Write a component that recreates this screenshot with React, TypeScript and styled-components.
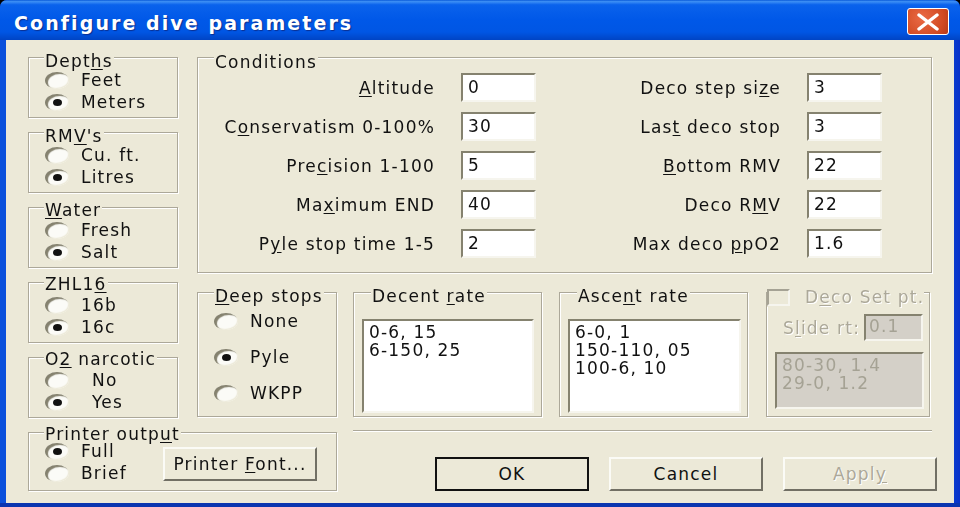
import React from "react";
import styled, { createGlobalStyle } from "styled-components";

const GlobalStyle = createGlobalStyle`
  html, body {
    margin: 0;
    padding: 0;
    background: #000;
    overflow: hidden;
  }
  body {
    font-family: "DejaVu Sans", "Liberation Sans", sans-serif;
    font-size: 17px;
    letter-spacing: 1.2px;
    color: #111;
  }
  u {
    text-underline-offset: 2px;
  }
`;

const Window = styled.div`
  width: 960px;
  height: 507px;
  display: flex;
  flex-direction: column;
  box-sizing: border-box;
  border-radius: 7px 7px 0 0;
  border-bottom: 4px solid #0a35b0;
  overflow: hidden;
  background: linear-gradient(90deg, #0a50dc 0, #0a50dc 98%, #0831c8 100%);
  filter: blur(0.35px);
`;

const TitleBar = styled.div`
  height: 40px;
  flex: none;
  display: flex;
  align-items: center;
  justify-content: space-between;
  padding: 0 11px 0 14px;
  background: linear-gradient(
    #0a5ad8 0,
    #3d8ff5 4%,
    #0a62ec 12%,
    #0058e8 50%,
    #0056e4 80%,
    #0044c4 100%
  );
`;

const Title = styled.div`
  margin-top: 5px;
  font-family: "DejaVu Sans", sans-serif;
  font-weight: 700;
  font-size: 19px;
  letter-spacing: 2.08px;
  color: #fff;
  text-shadow: 1px 1px 1px #0a2f90;
`;

const CloseButton = styled.div`
  width: 42px;
  height: 27px;
  box-sizing: border-box;
  margin-top: 3px;
  display: flex;
  align-items: center;
  justify-content: center;
  border: 1px solid #fff;
  border-radius: 3px;
  background: radial-gradient(circle at 35% 35%, #ea6a45, #d14a22 70%, #b83a18);
`;

const Client = styled.div`
  flex: 1;
  margin: 0 6px;
  padding: 17px 0 0 22px;
  background: #ece9d8;
  display: flex;
  flex-direction: column;
`;

const TopArea = styled.div`
  display: flex;
  gap: 19px;
`;

const LeftStack = styled.div`
  width: 150px;
  flex: none;
  display: flex;
  flex-direction: column;
  gap: 14px;
`;

const RightStack = styled.div`
  width: 735px;
  display: flex;
  flex-direction: column;
  gap: 19px;
`;

const GroupBox = styled.div<{ $width?: number; $height: number; $top?: number; $left?: number; $drop?: number }>`
  position: relative;
  box-sizing: border-box;
  flex: none;
  width: ${(p) => (p.$width ? `${p.$width}px` : "100%")};
  height: ${(p) => p.$height}px;
  margin-left: ${(p) => p.$left ?? 0}px;
  margin-top: ${(p) => p.$drop ?? 0}px;
  padding-top: ${(p) => p.$top ?? 11}px;
  border: 1px solid #aca899;
  box-shadow: 1px 1px 0 #fff, inset 1px 1px 0 #fff;
`;

const GroupLegend = styled.div<{ $left?: number; $top?: number }>`
  position: absolute;
  top: ${(p) => p.$top ?? -6}px;
  left: ${(p) => p.$left ?? 15}px;
  line-height: 18px;
  padding: 0 1px;
  background: #ece9d8;
  white-space: nowrap;
`;

const RadioRow = styled.div<{ $height?: number }>`
  height: ${(p) => p.$height ?? 22}px;
  display: flex;
  align-items: center;
  padding-left: 16px;
`;

const RadioMark = styled.span<{ $checked?: boolean }>`
  position: relative;
  width: 24px;
  height: 17px;
  flex: none;
  border-radius: 50%;
  background: #fbfbf7;
  box-shadow: inset 3px 2px 1px #85826f, inset -1px -1px 1px #ece9d8;
  &::after {
    content: "";
    display: ${(p) => (p.$checked ? "block" : "none")};
    position: absolute;
    left: 8px;
    top: 5px;
    width: 9px;
    height: 7px;
    border-radius: 50%;
    background: #111;
  }
`;

const RadioLabel = styled.span<{ $indent?: number }>`
  margin-left: ${(p) => p.$indent ?? 12}px;
`;

const ConditionsGrid = styled.div`
  display: grid;
  grid-template-columns: 263px 75px 271px 75px;
  grid-auto-rows: 29px;
  row-gap: 10px;
  align-items: center;
`;

const FieldLabel = styled.div`
  text-align: right;
  padding-right: 26px;
  white-space: nowrap;
`;

const TextField = styled.div<{ $disabled?: boolean; $width?: number }>`
  box-sizing: border-box;
  width: ${(p) => p.$width ?? 75}px;
  height: 29px;
  padding-left: 5px;
  line-height: 25px;
  border: 2px solid;
  border-color: #85826f #f6f5ee #f6f5ee #85826f;
  background: ${(p) => (p.$disabled ? "#d4d0c8" : "#fff")};
  color: ${(p) => (p.$disabled ? "#a5a294" : "#111")};
`;

const LowerRow = styled.div`
  display: flex;
  height: 125px;
`;

const ListBox = styled.div<{ $disabled?: boolean; $height: number; $width: number; $left: number }>`
  box-sizing: border-box;
  width: ${(p) => p.$width}px;
  height: ${(p) => p.$height}px;
  margin-left: ${(p) => p.$left}px;
  padding: 2px 0 0 5px;
  line-height: 18px;
  border: 2px solid;
  border-color: #85826f #f6f5ee #f6f5ee #85826f;
  background: ${(p) => (p.$disabled ? "#d4d0c8" : "#fff")};
  color: ${(p) => (p.$disabled ? "#a5a294" : "#111")};
`;

const CheckLegend = styled.div`
  position: absolute;
  top: -6px;
  left: 0;
  display: flex;
  align-items: center;
  background: #ece9d8;
  color: #aca899;
  text-shadow: 1px 1px 0 #fff;
  white-space: nowrap;
`;

const CheckBox = styled.span`
  width: 23px;
  height: 17px;
  box-sizing: border-box;
  margin-right: 15px;
  border: 2px solid;
  border-color: #a5a294 #f6f5ee #f6f5ee #a5a294;
`;

const SlideRow = styled.div`
  display: flex;
  align-items: center;
  justify-content: space-between;
  padding: 0 6px 0 16px;
  color: #aca899;
  text-shadow: 1px 1px 0 #fff;
  height: 27px;
  margin-bottom: 11px;
`;

const SmallField = styled(TextField)`
  height: 27px;
  line-height: 21px;
  padding-left: 3px;
  text-shadow: none;
`;

const BottomRow = styled.div`
  display: flex;
  gap: 16px;
  margin-top: 12px;
`;

const PrinterBody = styled.div`
  display: flex;
  justify-content: space-between;
  padding-right: 19px;
`;

const ButtonArea = styled.div`
  width: 584px;
`;

const Divider = styled.div`
  width: 579px;
  height: 1px;
  background: #aca899;
  box-shadow: 0 1px 0 #fff;
`;

const ButtonRow = styled.div`
  display: flex;
  justify-content: flex-end;
  gap: 20px;
  margin-top: 26px;
`;

const Button = styled.div<{ $default?: boolean; $disabled?: boolean; $top?: number }>`
  box-sizing: border-box;
  width: 154px;
  height: 34px;
  margin-top: ${(p) => p.$top ?? 0}px;
  display: flex;
  align-items: center;
  justify-content: center;
  background: #ece9d8;
  border: 2px solid;
  border-color: ${(p) => (p.$default ? "#111" : "#fbfbf6 #716f64 #716f64 #fbfbf6")};
  color: ${(p) => (p.$disabled ? "#aca899" : "#111")};
  text-shadow: ${(p) => (p.$disabled ? "1px 1px 0 #fff" : "none")};
`;

function RadioGroup({ items, checked, indent, height }: { items: string[]; checked: number; indent?: number; height?: number }) {
  return (
    <>
      {items.map((item, i) => (
        <RadioRow key={item} $height={height}>
          <RadioMark $checked={i === checked} />
          <RadioLabel $indent={indent}>{item}</RadioLabel>
        </RadioRow>
      ))}
    </>
  );
}

const rows: [React.ReactNode, string, React.ReactNode, string][] = [
  [<><u>A</u>ltitude</>, "0", <>Deco step si<u>z</u>e</>, "3"],
  [<>C<u>o</u>nservatism 0-100%</>, "30", <>Las<u>t</u> deco stop</>, "3"],
  [<>Pre<u>c</u>ision 1-100</>, "5", <><u>B</u>ottom RMV</>, "22"],
  [<>Ma<u>x</u>imum END</>, "40", <>Deco R<u>M</u>V</>, "22"],
  [<>P<u>y</u>le stop time 1-5</>, "2", <>Max deco <u>p</u>pO2</>, "1.6"],
];

export default function App() {
  return (
    <Window>
      <GlobalStyle />
      <TitleBar>
        <Title>Configure dive parameters</Title>
        <CloseButton>
          <svg width="24" height="18" viewBox="0 0 24 18">
            <path d="M3 2 L21 16 M21 2 L3 16" stroke="#fff" strokeWidth="3.4" strokeLinecap="round" />
          </svg>
        </CloseButton>
      </TitleBar>
      <Client>
        <TopArea>
          <LeftStack>
            <GroupBox $height={61}>
              <GroupLegend>Dept<u>h</u>s</GroupLegend>
              <RadioGroup items={["Feet", "Meters"]} checked={1} />
            </GroupBox>
            <GroupBox $height={61}>
              <GroupLegend>RM<u>V</u>'s</GroupLegend>
              <RadioGroup items={["Cu. ft.", "Litres"]} checked={1} />
            </GroupBox>
            <GroupBox $height={61}>
              <GroupLegend $top={-7}><u>W</u>ater</GroupLegend>
              <RadioGroup items={["Fresh", "Salt"]} checked={1} />
            </GroupBox>
            <GroupBox $height={61}>
              <GroupLegend $top={-8}>ZHL1<u>6</u></GroupLegend>
              <RadioGroup items={["16b", "16c"]} checked={1} />
            </GroupBox>
            <GroupBox $height={61}>
              <GroupLegend $top={-8}>O<u>2</u> narcotic</GroupLegend>
              <RadioGroup items={["No", "Yes"]} checked={1} indent={23} />
            </GroupBox>
          </LeftStack>
          <RightStack>
            <GroupBox $height={216} $top={15}>
              <GroupLegend $left={16} $top={-5}>Conditions</GroupLegend>
              <ConditionsGrid>
                {rows.map(([a, av, b, bv], i) => (
                  <React.Fragment key={i}>
                    <FieldLabel>{a}</FieldLabel>
                    <TextField>{av}</TextField>
                    <FieldLabel>{b}</FieldLabel>
                    <TextField>{bv}</TextField>
                  </React.Fragment>
                ))}
              </ConditionsGrid>
            </GroupBox>
            <LowerRow>
              <GroupBox $width={140} $height={125} $top={10}>
                <GroupLegend $left={16}><u>D</u>eep stops</GroupLegend>
                <RadioGroup items={["None", "Pyle", "WKPP"]} checked={1} height={36} />
              </GroupBox>
              <GroupBox $width={189} $height={125} $top={26} $left={16}>
                <GroupLegend $left={17}>Decent <u>r</u>ate</GroupLegend>
                <ListBox $width={172} $height={94} $left={8}>
                  0-6, 15<br />6-150, 25
                </ListBox>
              </GroupBox>
              <GroupBox $width={189} $height={125} $top={26} $left={17}>
                <GroupLegend $left={17}>Asce<u>n</u>t rate</GroupLegend>
                <ListBox $width={173} $height={94} $left={8}>
                  6-0, 1<br />150-110, 05<br />100-6, 10
                </ListBox>
              </GroupBox>
              <GroupBox $width={164} $height={125} $top={21} $left={18}>
                <CheckLegend>
                  <CheckBox />
                  <span>D<u>e</u>co Set pt.</span>
                </CheckLegend>
                <SlideRow>
                  <span>S<u>l</u>ide rt:</span>
                  <SmallField $disabled $width={59}>0.1</SmallField>
                </SlideRow>
                <ListBox $disabled $width={149} $height={57} $left={8}>
                  80-30, 1.4<br />29-0, 1.2
                </ListBox>
              </GroupBox>
            </LowerRow>
          </RightStack>
        </TopArea>
        <BottomRow>
          <GroupBox $width={309} $height={59} $top={7} $drop={2}>
            <GroupLegend $top={-8}>Printer outp<u>u</u>t</GroupLegend>
            <PrinterBody>
              <div>
                <RadioGroup items={["Full", "Brief"]} checked={0} />
              </div>
              <Button $top={7}><span>Printer <u>F</u>ont...</span></Button>
            </PrinterBody>
          </GroupBox>
          <ButtonArea>
            <Divider />
            <ButtonRow>
              <Button $default>OK</Button>
              <Button>Cancel</Button>
              <Button $disabled><span>Appl<u>y</u></span></Button>
            </ButtonRow>
          </ButtonArea>
        </BottomRow>
      </Client>
    </Window>
  );
}
